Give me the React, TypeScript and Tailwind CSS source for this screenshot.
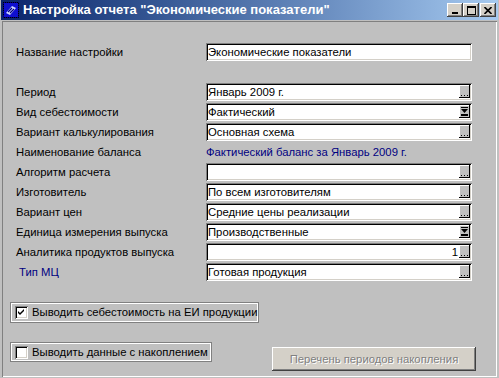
import React from "react";

const FONT = { fontFamily: '"Liberation Sans", Arial, sans-serif' };

function Ellipsis() {
  return (
    <div className="absolute right-[2px] top-[2px] w-[11px] h-[13px] bg-[#c0c0c0] shadow-[inset_-1px_-1px_0_#000,inset_1px_1px_0_#fff] flex items-end justify-center pb-[2px]">
      <svg width="7" height="1" viewBox="0 0 7 1">
        <rect x="0" y="0" width="1" height="1" fill="#000" />
        <rect x="3" y="0" width="1" height="1" fill="#000" />
        <rect x="6" y="0" width="1" height="1" fill="#000" />
      </svg>
    </div>
  );
}

function ComboBtn() {
  return (
    <div className="absolute right-[2px] top-[2px] w-[11px] h-[13px] bg-[#c0c0c0] shadow-[inset_-1px_-1px_0_#000,inset_1px_1px_0_#fff] flex items-center justify-center">
      <svg width="7" height="9" viewBox="0 0 7 9">
        <rect x="0" y="0" width="7" height="1" fill="#000" />
        <polygon points="0,2 7,2 3.5,6" fill="#000" />
        <rect x="0" y="7" width="7" height="2" fill="#000" />
      </svg>
    </div>
  );
}

function Field({
  value,
  kind,
  right,
}: {
  value: string;
  kind?: "ellipsis" | "combo";
  right?: boolean;
}) {
  return (
    <div className="relative w-[266px] h-[18px] bg-white shadow-[inset_1px_1px_0_#808080,inset_-1px_-1px_0_#fff,inset_2px_2px_0_#000,inset_-2px_-2px_0_#d4d0c8]">
      <div
        className={
          "absolute top-[2px] h-[14px] flex items-center text-[11.3px] text-black whitespace-nowrap " +
          (right ? "right-[14px]" : "left-[2px]")
        }
      >
        {value}
      </div>
      {kind === "ellipsis" && <Ellipsis />}
      {kind === "combo" && <ComboBtn />}
    </div>
  );
}

function Row({
  label,
  children,
  blue,
  indent,
}: {
  label: string;
  children: React.ReactNode;
  blue?: boolean;
  indent?: boolean;
}) {
  return (
    <div className="flex h-[20px]">
      <div
        className={
          "w-[190px] shrink-0 h-[18px] flex items-center text-[11.3px] whitespace-nowrap " +
          (blue ? "text-[#000080] " : "text-black ") +
          (indent ? "pl-[3px]" : "")
        }
      >
        {label}
      </div>
      {children}
    </div>
  );
}

function CheckBox({ checked }: { checked?: boolean }) {
  return (
    <div className="w-[13px] h-[13px] shrink-0 bg-white shadow-[inset_1px_1px_0_#808080,inset_-1px_-1px_0_#fff,inset_2px_2px_0_#000,inset_-2px_-2px_0_#d4d0c8] flex items-center justify-center">
      {checked && (
        <svg width="7" height="7" viewBox="0 0 7 7">
          <path d="M0 2 L2 4 L6 0 L6 2 L2 6 L0 4 Z" fill="#000" />
        </svg>
      )}
    </div>
  );
}

function TitleBtn({ children }: { children: React.ReactNode }) {
  return (
    <div className="w-[16px] h-[14px] shrink-0 bg-[#d4d0c8] shadow-[inset_-1px_-1px_0_#404040,inset_1px_1px_0_#fff,inset_-2px_-2px_0_#808080] flex items-center justify-center">
      {children}
    </div>
  );
}

export default function App() {
  return (
    <div className="w-[499px] h-[378px] bg-[#c0c0c0] overflow-hidden flex flex-col" style={FONT}>
      {/* Title bar */}
      <div className="h-[20px] shrink-0 mx-[1px] flex items-center bg-gradient-to-r from-[#0a246a] to-[#a6caf0]">
        <div className="w-[16px] h-[16px] shrink-0 ml-[2px] mr-[4px]">
          <svg width="16" height="16" viewBox="0 0 16 16">
            <rect x="0" y="0" width="16" height="16" fill="#000080" />
            <rect x="1" y="1" width="14" height="14" fill="#1010d0" />
            <g fill="#000">
              <rect x="0" y="0" width="1" height="1" />
              <rect x="2" y="0" width="1" height="1" />
              <rect x="4" y="0" width="1" height="1" />
              <rect x="6" y="0" width="1" height="1" />
              <rect x="8" y="0" width="1" height="1" />
              <rect x="10" y="0" width="1" height="1" />
              <rect x="12" y="0" width="1" height="1" />
              <rect x="14" y="0" width="1" height="1" />
              <rect x="1" y="15" width="1" height="1" />
              <rect x="3" y="15" width="1" height="1" />
              <rect x="5" y="15" width="1" height="1" />
              <rect x="7" y="15" width="1" height="1" />
              <rect x="9" y="15" width="1" height="1" />
              <rect x="11" y="15" width="1" height="1" />
              <rect x="13" y="15" width="1" height="1" />
              <rect x="15" y="15" width="1" height="1" />
              <rect x="0" y="2" width="1" height="1" />
              <rect x="0" y="4" width="1" height="1" />
              <rect x="0" y="6" width="1" height="1" />
              <rect x="0" y="8" width="1" height="1" />
              <rect x="0" y="10" width="1" height="1" />
              <rect x="0" y="12" width="1" height="1" />
              <rect x="15" y="1" width="1" height="1" />
              <rect x="15" y="3" width="1" height="1" />
              <rect x="15" y="5" width="1" height="1" />
              <rect x="15" y="7" width="1" height="1" />
              <rect x="15" y="9" width="1" height="1" />
              <rect x="15" y="11" width="1" height="1" />
              <rect x="15" y="13" width="1" height="1" />
            </g>
            <path d="M3 11 L9 4 L13 6 L7 13 Z" fill="#d0d8ff" />
            <path d="M5 10 L9 6 M7 11 L11 7" stroke="#000080" strokeWidth="1.2" />
          </svg>
        </div>
        <div className="text-white font-bold text-[13px] whitespace-nowrap flex-1">
          Настройка отчета "Экономические показатели"
        </div>
        <div className="flex items-center mr-[2px]">
          <TitleBtn>
            <div className="w-[6px] h-[2px] bg-black mt-[6px]" />
          </TitleBtn>
          <TitleBtn>
            <div className="w-[9px] h-[9px] border border-black border-t-2" />
          </TitleBtn>
          <div className="w-[1px]" />
          <TitleBtn>
            <svg width="8" height="7" viewBox="0 0 8 7">
              <path d="M0.5 0 L7.5 7 M7.5 0 L0.5 7" stroke="#000" strokeWidth="1.6" />
            </svg>
          </TitleBtn>
        </div>
      </div>

      {/* Body panel */}
      <div className="mt-[1px] ml-[2px] mr-[2px] mb-[1px] flex-1 shadow-[inset_1px_1px_0_#808080,inset_-1px_-1px_0_#fff] pl-[14px] pt-[22px]">
        <Row label="Название настройки">
          <Field value="Экономические показатели" />
        </Row>
        <div className="h-[20px]" />
        <Row label="Период">
          <Field value="Январь 2009 г." kind="ellipsis" />
        </Row>
        <Row label="Вид себестоимости">
          <Field value="Фактический" kind="combo" />
        </Row>
        <Row label="Вариант калькулирования">
          <Field value="Основная схема" kind="ellipsis" />
        </Row>
        <Row label="Наименование баланса">
          <div className="h-[18px] flex items-center text-[11.3px] text-[#000080] whitespace-nowrap">
            Фактический баланс за Январь 2009 г.
          </div>
        </Row>
        <Row label="Алгоритм расчета">
          <Field value="" kind="ellipsis" />
        </Row>
        <Row label="Изготовитель">
          <Field value="По всем изготовителям" kind="ellipsis" />
        </Row>
        <Row label="Вариант цен">
          <Field value="Средние цены реализации" kind="ellipsis" />
        </Row>
        <Row label="Единица измерения выпуска">
          <Field value="Производственные" kind="combo" />
        </Row>
        <Row label="Аналитика продуктов выпуска">
          <Field value="1" kind="ellipsis" right />
        </Row>
        <Row label="Тип МЦ" blue indent>
          <Field value="Готовая продукция" kind="ellipsis" />
        </Row>

        <div className="-ml-[6px] mt-[19px] w-[249px] h-[21px] shadow-[inset_1px_1px_0_#808080,inset_-1px_-1px_0_#808080,inset_2px_2px_0_#fff,inset_-2px_-2px_0_#fff] flex items-center pl-[5px] gap-[4px]">
          <CheckBox checked />
          <span className="text-[11.3px] text-black whitespace-nowrap">Выводить себестоимость на ЕИ продукции</span>
        </div>

        <div className="-ml-[6px] mt-[19px] flex items-start">
          <div className="w-[202px] shrink-0 h-[20px] shadow-[inset_1px_1px_0_#808080,inset_-1px_-1px_0_#808080,inset_2px_2px_0_#fff,inset_-2px_-2px_0_#fff] flex items-center pl-[5px] gap-[4px]">
            <CheckBox />
            <span className="text-[11.3px] text-black whitespace-nowrap">Выводить данные с накоплением</span>
          </div>
          <div className="ml-[60px] shrink-0 mt-[5px] w-[204px] h-[24px] bg-[#d4d0c8] shadow-[inset_-1px_-1px_0_#404040,inset_1px_1px_0_#fff,inset_-2px_-2px_0_#808080] flex items-center justify-center">
            <span className="text-[11.3px] text-[#808080] whitespace-nowrap [text-shadow:1px_1px_0_#fff]">
              Перечень периодов накопления
            </span>
          </div>
        </div>
      </div>
    </div>
  );
}
